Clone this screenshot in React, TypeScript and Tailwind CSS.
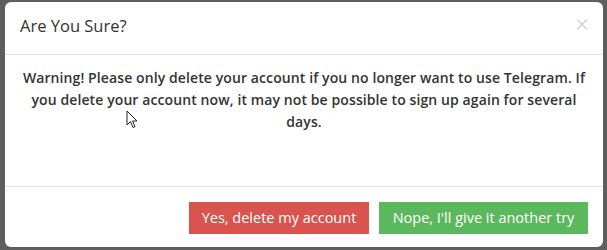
export default function App() {
  return (
    <div className="w-[607px] h-[250px] bg-[#5e5e5e] pt-[2px] pl-[5px] overflow-hidden font-['Open_Sans','Liberation_Sans',sans-serif] text-[#333]">
      <div className="relative w-[598px] h-[245px] bg-white rounded-[6px] flex flex-col">
        <div className="h-[53px] border-b border-[#e5e5e5] flex items-center justify-between px-[15px] pb-[3px]">
          <h4 className="text-[16.5px] font-medium leading-none">Are You Sure?</h4>
          <button className="text-[#c8c8c8] text-[24px] font-light leading-none -mr-[1px] -mt-[6px]">×</button>
        </div>
        <div className="h-[131px] px-[15px] pt-[12px]">
          <p className="text-center text-[14px] font-semibold leading-[22px] tracking-[0.1px]">
            Warning! Please only delete your account if you no longer want to use Telegram. If you delete your account now, it may not be possible to sign up again for several days.
          </p>
        </div>
        <div className="flex-1 border-t border-[#e5e5e5] flex justify-end items-start gap-[10px] pt-[15px] pr-[15px]">
          <button className="h-[32px] w-[180px] bg-[#d9534f] text-white text-[14.5px] font-medium">Yes, delete my account</button>
          <button className="h-[32px] w-[209px] bg-[#5cb85c] text-white text-[14.5px] font-medium">Nope, I'll give it another try</button>
        </div>
        <svg className="absolute left-[121px] top-[108px]" width="12" height="19" viewBox="0 0 12 19">
          <path d="M1 1 L1 15 L4.5 11.5 L7 17.5 L9 16.6 L6.6 11 L11 11 Z" fill="white" stroke="#222" strokeWidth="1" strokeLinejoin="round" />
        </svg>
      </div>
    </div>
  )
}
